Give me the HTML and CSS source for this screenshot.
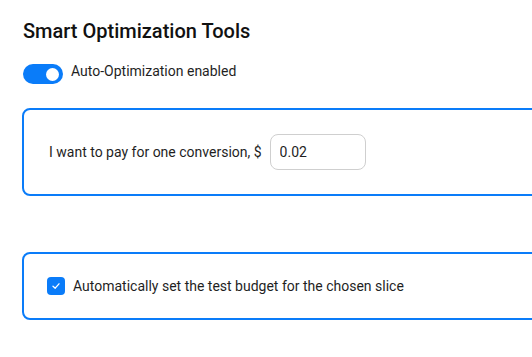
FILE: index.html
```html
<!DOCTYPE html>
<html lang="en">
<head>
<meta charset="utf-8">
<link rel="stylesheet" href="styles.css">
</head>
<body>
<div class="page">
  <h2 class="title">Smart Optimization Tools</h2>
  <label class="toggle-row">
    <span class="toggle"><span class="knob"></span></span>
    <span class="toggle-label">Auto-Optimization enabled</span>
  </label>
  <div class="card card-price">
    <span class="field-label">I want to pay for one conversion, $</span>
    <input class="price-input" type="text" value="0.02">
  </div>
  <div class="card card-check">
    <span class="checkbox">
      <svg width="10" height="10" viewBox="0 0 10 10"><path d="M2 5.2 L4.2 7.2 L8 2.8" fill="none" stroke="#fff" stroke-width="1.3" stroke-linecap="round" stroke-linejoin="round"/></svg>
    </span>
    <span class="check-label">Automatically set the test budget for the chosen slice</span>
  </div>
</div>
</body>
</html>
```
FILE: styles.css
```css
html, body {
  margin: 0;
  padding: 0;
  background: #fff;
  overflow: hidden;
}
body {
  font-family: Roboto, "Noto Sans", sans-serif;
  color: #1f1f1f;
}
.page {
  padding: 18px 0 0 23px;
  width: 600px;
}
.title {
  margin: 0;
  font-size: 20px;
  font-weight: 500;
  color: #111;
  line-height: 26px;
}
.toggle-row {
  display: flex;
  align-items: flex-start;
  gap: 8px;
  margin-top: 20px;
  font-size: 14px;
}
.toggle-label {
  line-height: 16px;
  margin-top: -1px;
}
.toggle {
  width: 40px;
  height: 20px;
  border-radius: 10px;
  background: #0a7cf9;
  display: flex;
  align-items: center;
  justify-content: flex-end;
  padding-right: 4px;
  box-sizing: border-box;
}
.knob {
  width: 13px;
  height: 13px;
  border-radius: 50%;
  background: #fff;
}
.card {
  border: 2px solid #0a7cf9;
  border-radius: 8px;
  display: flex;
  align-items: center;
  box-sizing: border-box;
  margin-left: -1px;
}
.card-price {
  margin-top: 24px;
  height: 88px;
  padding-left: 25px;
  gap: 8px;
  font-size: 14px;
}
.price-input {
  width: 96px;
  height: 36px;
  box-sizing: border-box;
  border: 1px solid #cfcfcf;
  border-radius: 8px;
  padding: 0 9px;
  font-family: Roboto, sans-serif;
  font-size: 14px;
  color: #1f1f1f;
  outline: none;
}
.card-check {
  margin-top: 56px;
  height: 68px;
  padding-left: 23px;
  gap: 8px;
  font-size: 14px;
}
.checkbox {
  width: 18px;
  height: 18px;
  border-radius: 4px;
  background: #0a7cf9;
  display: flex;
  align-items: center;
  justify-content: center;
}
```
